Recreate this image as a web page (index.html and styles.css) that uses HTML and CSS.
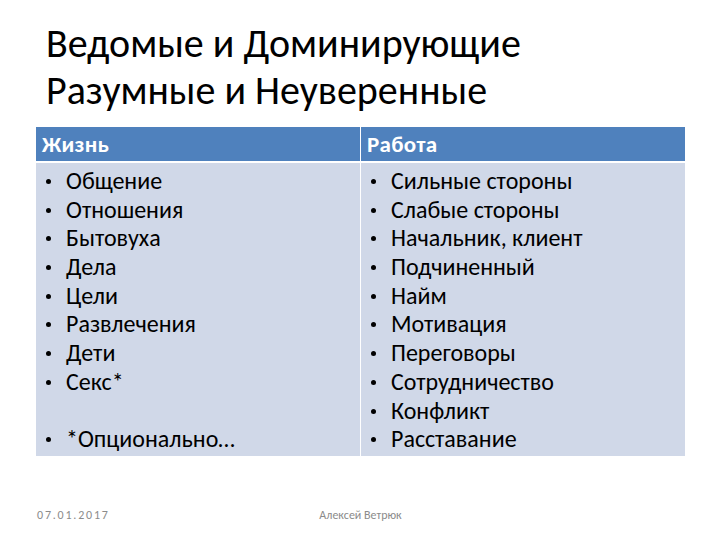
FILE: index.html
```html
<!DOCTYPE html>
<html lang="ru">
<head>
<meta charset="utf-8">
<title>Ведомые и Доминирующие</title>
<link rel="stylesheet" href="styles.css">
</head>
<body>
<div class="slide">
  <h1 class="title">Ведомые и Доминирующие<br>Разумные и Неуверенные</h1>
  <div class="table">
    <div class="head">Жизнь</div>
    <div class="head">Работа</div>
    <div class="cell">
      <ul class="list">
        <li>Общение</li>
        <li>Отношения</li>
        <li>Бытовуха</li>
        <li>Дела</li>
        <li>Цели</li>
        <li>Развлечения</li>
        <li>Дети</li>
        <li>Секс*</li>
        <li class="blank"></li>
        <li>*Опционально…</li>
      </ul>
    </div>
    <div class="cell">
      <ul class="list">
        <li>Сильные стороны</li>
        <li>Слабые стороны</li>
        <li>Начальник, клиент</li>
        <li>Подчиненный</li>
        <li>Найм</li>
        <li>Мотивация</li>
        <li>Переговоры</li>
        <li>Сотрудничество</li>
        <li>Конфликт</li>
        <li>Расставание</li>
      </ul>
    </div>
  </div>
  <div class="footer">
    <span class="date">07.01.2017</span>
    <span class="author">Алексей Ветрюк</span>
    <span class="spacer"></span>
  </div>
</div>
</body>
</html>
```
FILE: styles.css
```css
html, body {
  margin: 0;
  padding: 0;
  background: #ffffff;
}
.slide {
  width: 720px;
  height: 540px;
  box-sizing: border-box;
  padding: 20px 36px 0 36px;
  font-family: "Carlito", "Lato", "Liberation Sans", sans-serif;
  color: #000000;
  display: flex;
  flex-direction: column;
}
.title {
  margin: 0 0 0 10px;
  font-weight: normal;
  font-size: 40px;
  line-height: 47px;
  height: 107px;
  white-space: nowrap;
}
.table {
  display: grid;
  grid-template-columns: 324px 324px;
  grid-template-rows: 34px 293px;
  column-gap: 1px;
  row-gap: 2px;
  width: 649px;
  background: #ffffff;
}
.head {
  background: #4f81bd;
  color: #ffffff;
  font-weight: bold;
  font-size: 23px;
  letter-spacing: 0.3px;
  line-height: 34px;
  padding-left: 6px;
}
.cell {
  background: #d0d8e8;
  padding: 4px 6px 0 4px;
}
.list {
  margin: 0;
  padding: 0;
  list-style: none;
  font-size: 24px;
  line-height: 28.7px;
}
.list li {
  position: relative;
  padding-left: 26px;
  height: 28.7px;
}
.list li::before {
  content: "";
  position: absolute;
  left: 6px;
  top: 12px;
  width: 5px;
  height: 5px;
  border-radius: 50%;
  background: #000000;
}
.list li.blank::before {
  display: none;
}
.footer {
  margin-top: auto;
  height: 40px;
  display: flex;
  align-items: flex-start;
  font-size: 12px;
  color: #8b8b8b;
}
.date {
  flex: 1;
  padding-left: 1px;
  padding-top: 8px;
  letter-spacing: 1.8px;
}
.author {
  padding-top: 8px;
}
.spacer {
  flex: 1;
}
```
